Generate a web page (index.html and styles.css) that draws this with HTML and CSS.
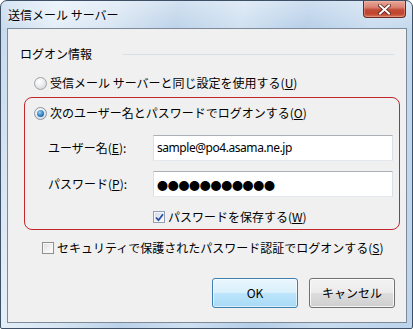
FILE: index.html
```html
<!DOCTYPE html>
<html lang="ja">
<head>
<meta charset="utf-8">
<title>送信メール サーバー</title>
<link rel="stylesheet" href="styles.css">
</head>
<body>
<div class="window">
  <div class="titlebar">
    <span class="title">送信メール サーバー</span>
    <div class="close">
      <svg width="13" height="11" viewBox="0 0 13 11">
        <path d="M2 1.5 L11 9.5 M11 1.5 L2 9.5" stroke="#5a2018" stroke-width="3.6" stroke-linecap="square" fill="none"/>
        <path d="M2 1.5 L11 9.5 M11 1.5 L2 9.5" stroke="#ffffff" stroke-width="2" stroke-linecap="square" fill="none"/>
      </svg>
    </div>
  </div>
  <div class="client">
    <div class="group-head">
      <span>ログオン情報</span>
      <span class="rule"></span>
    </div>
    <div class="row radio-row">
      <span class="radio"></span>
      <span>受信メール サーバーと同じ設定を使用する(<u>U</u>)</span>
    </div>
    <div class="redbox">
      <div class="row">
        <span class="radio checked"><span class="dot"></span></span>
        <span>次のユーザー名とパスワードでログオンする(<u>O</u>)</span>
      </div>
      <div class="field-row first">
        <span class="label">ユーザー名(<u>E</u>):</span>
        <div class="field"><span class="field-text">sample@po4.asama.ne.jp</span></div>
      </div>
      <div class="field-row">
        <span class="label">パスワード(<u>P</u>):</span>
        <div class="field"><span class="dots">●●●●●●●●●●●</span></div>
      </div>
      <div class="row save-row">
        <span class="check checked">
          <svg width="9" height="9" viewBox="0 0 9 9"><path d="M1 4.5 L3.5 7.2 L8 1.2" stroke="#2c4f9e" stroke-width="1.8" fill="none"/></svg>
        </span>
        <span>パスワードを保存する(<u>W</u>)</span>
      </div>
    </div>
    <div class="row spa-row">
      <span class="check"></span>
      <span>セキュリティで保護されたパスワード認証でログオンする(<u>S</u>)</span>
    </div>
    <div class="buttons">
      <div class="btn default">OK</div>
      <div class="btn">キャンセル</div>
    </div>
  </div>
</div>
</body>
</html>
```

FILE: styles.css
```css
html, body {
  margin: 0;
  padding: 0;
  background: #ffffff;
}

body {
  font-family: "Noto Sans CJK JP", sans-serif;
  font-size: 12px;
  color: #000000;
}

.window {
  width: 413px;
  height: 329px;
  box-sizing: border-box;
  border: 1px solid #3d5066;
  border-radius: 7px 7px 2px 2px;
  display: flex;
  flex-direction: column;
  padding: 0 5px 5px 6px;
  background:
    linear-gradient(180deg, rgba(255,255,255,0.35) 0px, rgba(255,255,255,0) 30px),
    linear-gradient(100deg, #c3d7ec 0%, #e4eef8 12%, #d6e4f2 25%, #bcd2e9 38%, #cfe0f1 52%, #b6cee8 66%, #c9dcef 80%, #bcd4ec 100%);
}

.titlebar {
  height: 27px;
  display: flex;
  align-items: flex-start;
}

.title {
  margin-left: 1px;
  margin-top: 5px;
  line-height: 18px;
  font-size: 12px;
  color: #000000;
  text-shadow: 0 0 6px rgba(255,255,255,0.9);
}

.close {
  margin-left: auto;
  margin-right: 1px;
  width: 43px;
  height: 17px;
  box-sizing: border-box;
  border: 1px solid #6a2a22;
  border-top: none;
  border-radius: 0 0 4px 4px;
  background: linear-gradient(180deg, #e8a898 0%, #d98070 40%, #c24a38 55%, #c0452f 80%, #d8745a 100%);
  display: flex;
  align-items: center;
  justify-content: center;
  box-shadow: inset 0 0 0 1px rgba(255,200,190,0.35);
}

.client {
  flex: 1;
  border: 1px solid #7d8b99;
  background: #f0f0f0;
  display: flex;
  flex-direction: column;
  padding-top: 17px;
}

.group-head {
  height: 16px;
  line-height: 16px;
  display: flex;
  align-items: center;
  margin: 0 12px 0 12px;
}

.rule {
  flex: 1;
  height: 1px;
  background: #d5dfe5;
  margin-left: 31px;
}

.row {
  height: 16px;
  line-height: 16px;
  display: flex;
  align-items: center;
  white-space: nowrap;
}

.radio-row {
  margin-top: 13px;
  margin-left: 26px;
}

.radio {
  width: 13px;
  height: 13px;
  box-sizing: border-box;
  border-radius: 50%;
  border: 1px solid #a0a4a8;
  background: radial-gradient(circle at 40% 35%, #ffffff 0%, #f0f0f0 40%, #c9cbcd 100%);
  margin-right: 3px;
  display: flex;
  align-items: center;
  justify-content: center;
  flex: none;
}

.radio.checked {
  border-color: #8a96a6;
}

.radio .dot {
  width: 7px;
  height: 7px;
  border-radius: 50%;
  background: radial-gradient(circle at 40% 35%, #9fd3f5 0%, #2d7dc2 55%, #134b88 100%);
}

.redbox {
  margin-top: 6px;
  margin-left: 16px;
  width: 376px;
  box-sizing: border-box;
  border: 1px solid #c1272d;
  border-radius: 8px;
  padding: 7px 0 4px 9px;
  display: flex;
  flex-direction: column;
}

.field-row {
  display: flex;
  align-items: center;
  margin-top: 10px;
  margin-left: 14px;
}

.field-row.first {
  margin-top: 14px;
}

.label {
  width: 105px;
  line-height: 16px;
  white-space: nowrap;
}

.field {
  width: 240px;
  height: 26px;
  box-sizing: border-box;
  background: #ffffff;
  border: 1px solid #dadfe6;
  border-top-color: #abb0b7;
  border-bottom-color: #e3e8ee;
  display: flex;
  align-items: center;
  padding-left: 3px;
}

.field-text {
  font-family: "Noto Sans", sans-serif;
  font-size: 12px;
  line-height: 16px;
  letter-spacing: -0.45px;
}

.dots {
  font-size: 11px;
  line-height: 14px;
  letter-spacing: -0.3px;
  margin-top: 1px;
}

.save-row {
  margin-top: 12px;
  margin-left: 119px;
}

.check {
  width: 12px;
  height: 12px;
  box-sizing: border-box;
  border: 1px solid #8f8f8f;
  background: linear-gradient(135deg, #dcdcdc 0%, #f3f3f3 60%, #ffffff 100%);
  box-shadow: inset 0 0 0 1px #f7f7f7;
  margin-right: 3px;
  display: flex;
  align-items: center;
  justify-content: center;
  flex: none;
}

.check.checked {
  border-color: #8e9fb6;
  background: linear-gradient(135deg, #d2dced 0%, #e9eef7 60%, #fbfcfe 100%);
}

.spa-row {
  margin-top: 10px;
  margin-left: 34px;
}

.buttons {
  display: flex;
  justify-content: flex-end;
  gap: 11px;
  margin-top: 22px;
  margin-right: 11px;
}

.btn {
  width: 86px;
  height: 30px;
  box-sizing: border-box;
  border: 1px solid #707070;
  border-radius: 3px;
  background: linear-gradient(180deg, #f2f2f2 0%, #ebebeb 49%, #dddddd 50%, #cfcfcf 100%);
  box-shadow: inset 0 0 0 1px rgba(255,255,255,0.8);
  display: flex;
  align-items: center;
  justify-content: center;
  line-height: 16px;
}

.btn.default {
  border-color: #3c7fb1;
  background: linear-gradient(180deg, #eaf6fd 0%, #d9f0fc 49%, #bee6fd 50%, #a7d9f5 100%);
  box-shadow: inset 0 0 0 1px rgba(255,255,255,0.6);
}
```
